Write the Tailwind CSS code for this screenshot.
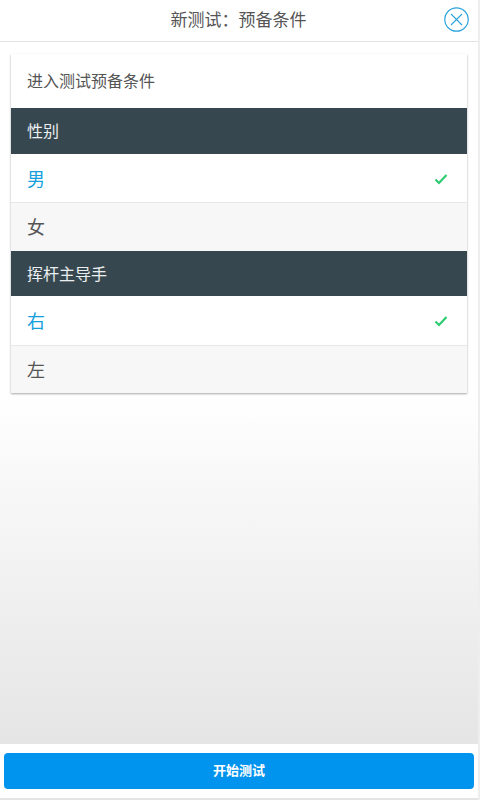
<!DOCTYPE html>
<html lang="zh-CN">
  <head>
    <meta charset="UTF-8" />
    <meta name="viewport" content="width=device-width, initial-scale=1.0" />
    <script src="https://cdn.jsdelivr.net/npm/@tailwindcss/browser@4"></script>
    <title>新测试</title>
  </head>
  <body class="h-[800px] w-[480px] overflow-hidden bg-white font-['Liberation_Sans','Noto_Sans_CJK_SC',sans-serif] text-[#444]">
    <div class="flex h-[800px] flex-col border-r-2 border-[#eee]">
      <!-- header -->
      <header class="relative flex h-[42px] shrink-0 items-center justify-center border-b border-[#e4e4e4] bg-white pr-[1px] text-[17px] text-[#555]">
        <span>新测试：预备条件</span>
        <button class="absolute right-[9px] top-[7px] h-[25px] w-[25px]">
          <svg viewBox="0 0 25 25" class="h-[25px] w-[25px]" fill="none" stroke="#2aa3dc">
            <circle cx="12.5" cy="12.5" r="11.7" stroke-width="1.2" />
            <path d="M7 7 L18 18 M18 7 L7 18" stroke-width="1.1" />
          </svg>
        </button>
      </header>

      <!-- content -->
      <main class="min-h-0 flex-1 bg-[linear-gradient(#fff_0,#fff_350px,#e5e5e5_100%)] pl-[11px] pr-[11px] pt-3">
        <div class="w-[456px] bg-white shadow-[0_1px_2px_rgba(0,0,0,0.35)]">
          <div class="flex h-[54px] items-center px-4 pt-[2px] text-[16px] text-[#555]">进入测试预备条件</div>
          <div class="flex h-[46px] items-center bg-[#37474f] px-4 pt-[2px] text-[16px] text-[#eceff1]">性别</div>
          <div class="flex h-[49px] items-center justify-between border-b border-[#e8e8e8] bg-white pl-4 pr-[19px] pt-[5px] text-[18px] text-[#159fdc]">
            <span>男</span>
            <svg viewBox="0 0 14 12" class="mb-[3px] h-3 w-[14px]" fill="none" stroke="#2ecc71" stroke-width="2.2">
              <path d="M1.5 6.5 L5 10 L12.5 2" />
            </svg>
          </div>
          <div class="flex h-[48px] items-center bg-[#f7f7f7] px-4 pt-[3px] text-[18px] text-[#555]">女</div>
          <div class="flex h-[45px] items-center bg-[#37474f] px-4 pt-[2px] text-[16px] text-[#eceff1]">挥杆主导手</div>
          <div class="flex h-[50px] items-center justify-between border-b border-[#e8e8e8] bg-white pl-4 pr-[19px] pt-[4px] text-[18px] text-[#159fdc]">
            <span>右</span>
            <svg viewBox="0 0 14 12" class="mb-[3px] h-3 w-[14px]" fill="none" stroke="#2ecc71" stroke-width="2.2">
              <path d="M1.5 6.5 L5 10 L12.5 2" />
            </svg>
          </div>
          <div class="flex h-[47px] items-center bg-[#f7f7f7] px-4 pt-[3px] text-[18px] text-[#555]">左</div>
        </div>
      </main>

      <!-- footer -->
      <footer class="h-[56px] shrink-0 border-b-2 border-[#e4e4e4] bg-white pl-1 pt-[9px]">
        <button class="flex h-[36px] w-[470px] items-center justify-center rounded-[4px] bg-[#0094ee] text-[13px] font-bold text-white">开始测试</button>
      </footer>
    </div>
  </body>
</html>
